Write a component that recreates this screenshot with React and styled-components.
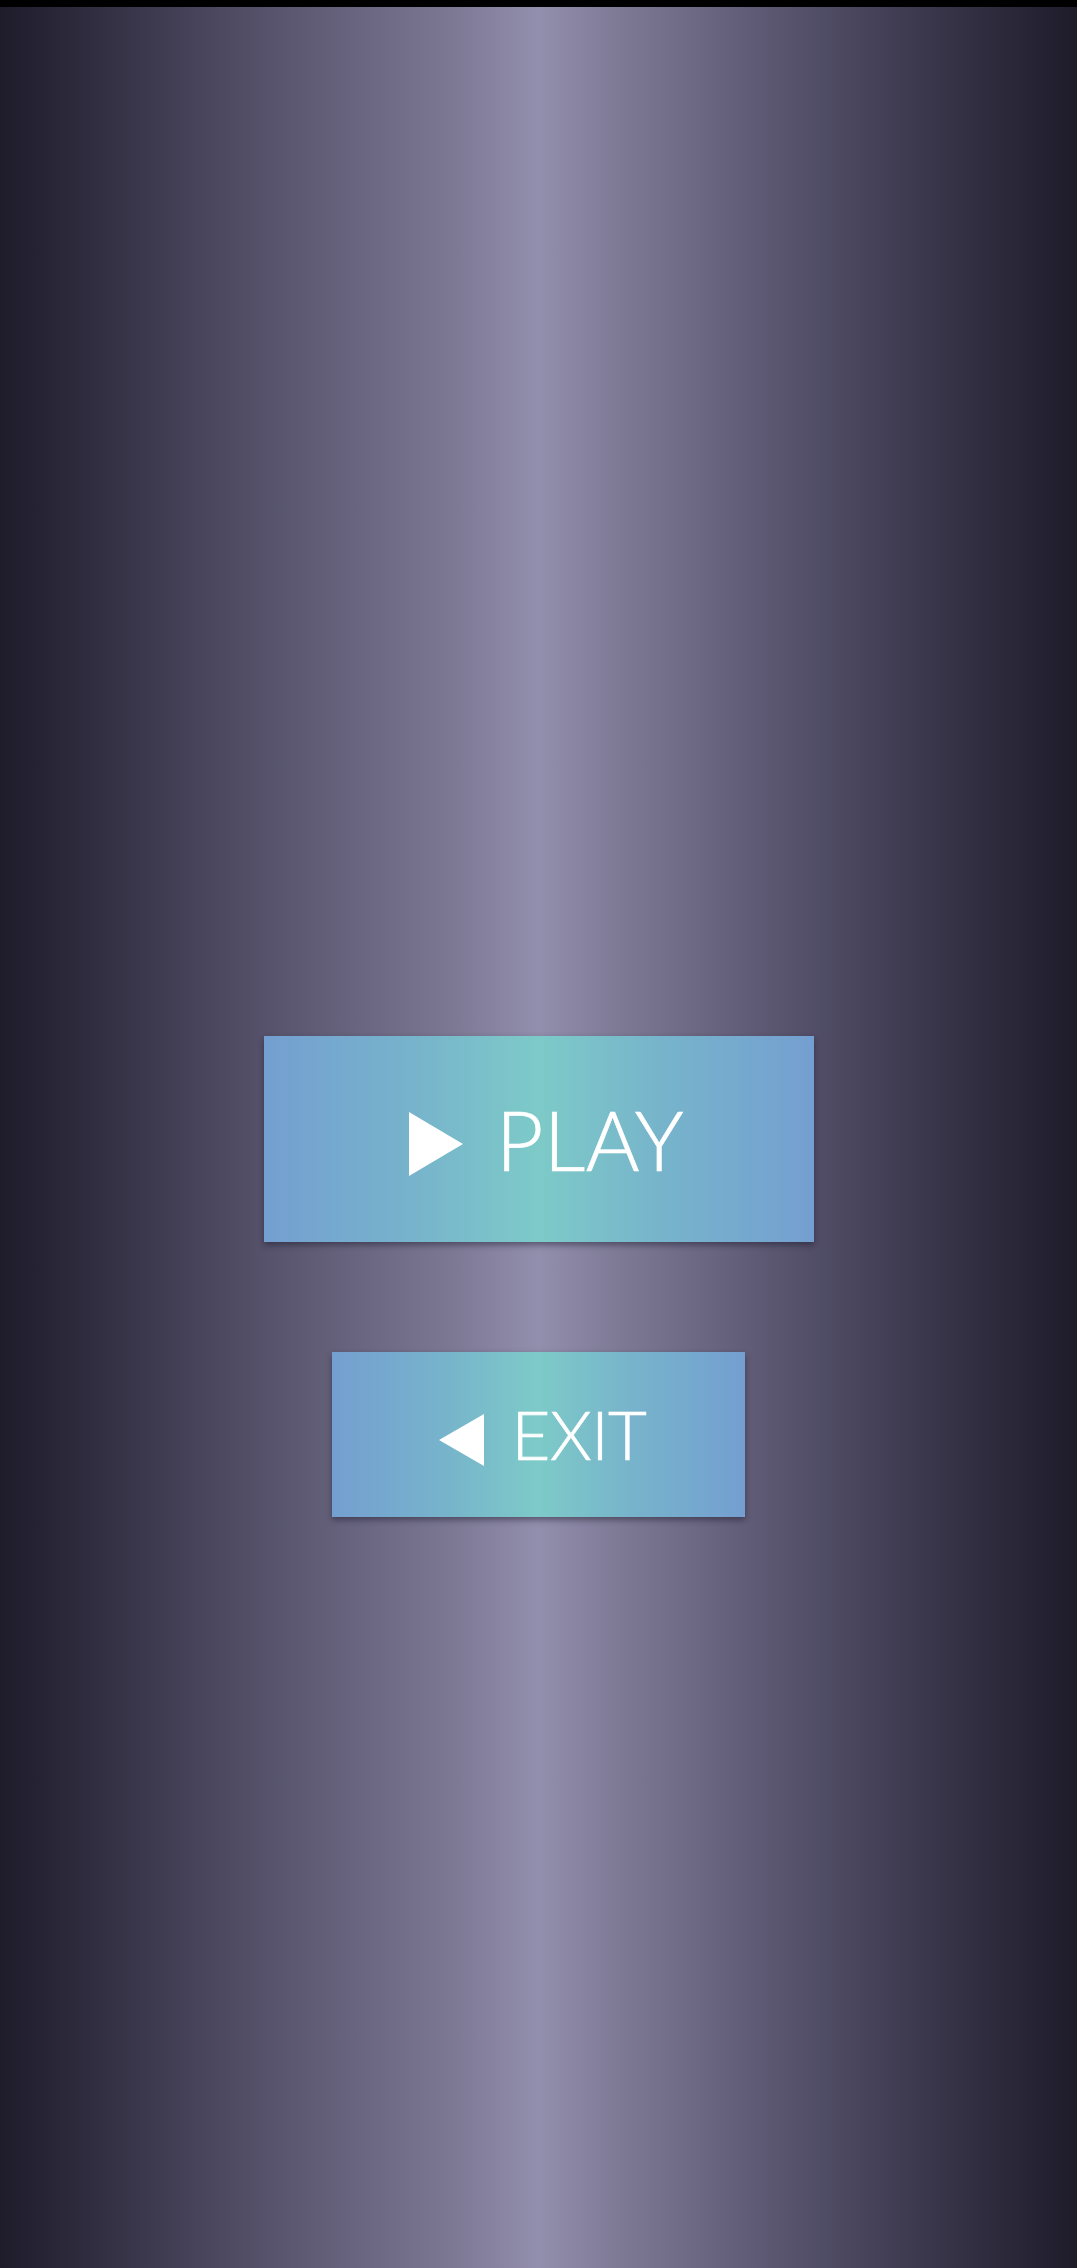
import React from "react";
import styled, { createGlobalStyle } from "styled-components";

const Global = createGlobalStyle`
  html, body { margin: 0; padding: 0; background: #000; }
  body { font-family: "Lato", "Open Sans", sans-serif; }
`;

const Page = styled.div`
  min-height: 2268px;
  display: flex;
  flex-direction: column;
`;

const StatusBar = styled.div`
  height: 7px;
  background: #000;
`;

const Stage = styled.main`
  flex: 1;
  display: flex;
  flex-direction: column;
  align-items: center;
  padding-top: 1029px;
  gap: 110px;
  background: linear-gradient(
    to right,
    #1e1c2a 0%,
    #2f2c3f 8%,
    #46435a 18%,
    #625e78 30%,
    #7c7894 42%,
    #928ead 50%,
    #7f7b97 57%,
    #645f7a 68%,
    #47445c 80%,
    #302d40 91%,
    #1e1c2a 100%
  );
`;

const MenuButton = styled.button`
  width: ${(p) => p.$w}px;
  height: ${(p) => p.$h}px;
  border: none;
  padding: 0 0 0 ${(p) => p.$shift}px;
  display: flex;
  align-items: center;
  justify-content: center;
  gap: ${(p) => p.$gap}px;
  background: linear-gradient(
    to right,
    #749fd1 0%,
    #77b4cb 28%,
    #7dcac8 50%,
    #77b4cb 72%,
    #749fd1 100%
  );
  box-shadow: 0 3px 6px rgba(20, 18, 35, 0.45);
  color: #fff;
  font-family: "Lato", "Open Sans", sans-serif;
  font-weight: 300;
  font-size: ${(p) => p.$fs}px;
  line-height: 1;
  cursor: pointer;
`;

const Label = styled.span`
  display: block;
  letter-spacing: ${(p) => p.$ls}px;
  -webkit-text-stroke: 0.7px #fff;
`;

const Icon = styled.svg`
  display: block;
  flex-shrink: 0;
  transform: translateY(${(p) => p.$dy}px);
`;

export default function App() {
  return (
    <>
      <Global />
      <Page>
        <StatusBar />
        <Stage>
          <MenuButton $w={550} $h={206} $gap={33} $fs={82} $shift={16}>
            <Icon width="54" height="64" viewBox="0 0 54 64" $dy={5}>
              <polygon points="0,0 54,32 0,64" fill="#fff" />
            </Icon>
            <Label $ls={0.5}>PLAY</Label>
          </MenuButton>
          <MenuButton $w={413} $h={165} $gap={28} $fs={67} $shift={8}>
            <Icon width="45" height="52" viewBox="0 0 45 52" $dy={5}>
              <polygon points="45,0 0,26 45,52" fill="#fff" />
            </Icon>
            <Label $ls={-0.5}>EXIT</Label>
          </MenuButton>
        </Stage>
      </Page>
    </>
  );
}
